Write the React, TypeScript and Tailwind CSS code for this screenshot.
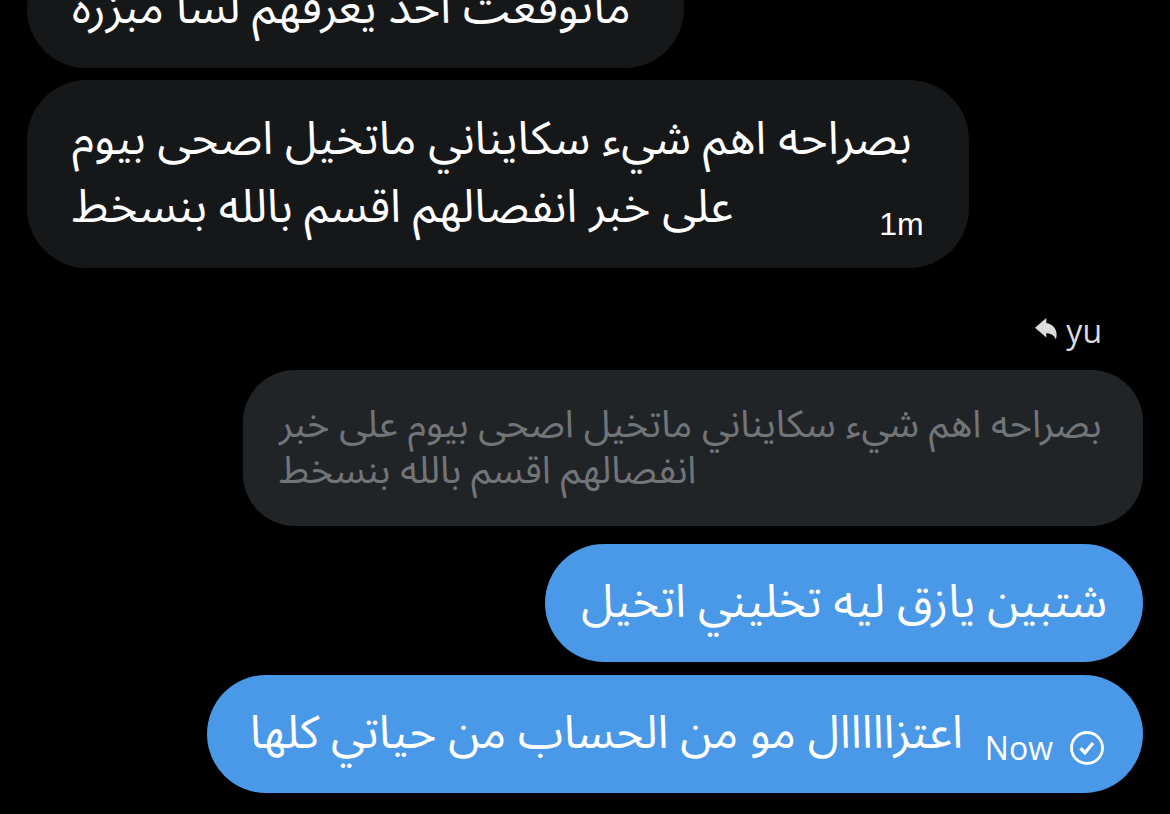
import type { ReactNode } from "react";

type BubbleProps = { children: ReactNode; className: string };

function Bubble({ children, className }: BubbleProps) {
  return <article className={`w-fit max-w-full ${className}`}>{children}</article>;
}

function SentIcon() {
  return (
    <svg role="img" aria-label="Sent" viewBox="0 0 36 36" className="size-9 shrink-0" fill="none" stroke="currentColor">
      <circle cx="18" cy="18" r="15.5" strokeWidth="2.8" />
      <path d="M11.5 18.3l4.5 4.5 8-9.8" strokeWidth="3.4" />
    </svg>
  );
}

function ReplyIcon() {
  return (
    <svg aria-hidden="true" viewBox="0 0 22 22" className="mb-1 size-[22px]" fill="currentColor">
      <path d="M0 9.7 11.3 0v4.9c6.3 1 10.3 5.6 10.3 11.6 0 1.8-.2 3.4-.7 5-1.6-4.1-4.9-6.3-9.6-6.3v4.4z" />
    </svg>
  );
}

export default function App() {
  return (
    <main
      lang="ar"
      className="flex h-screen flex-col overflow-hidden bg-black px-[27px] font-['Noto_Sans','Noto_Sans_Arabic',sans-serif] text-[46px] leading-[68px] text-white"
    >
      <section className="flex flex-col items-start gap-3">
        <Bubble className="-mt-[50px] rounded-[60px] bg-[#161719] pt-[21px] pr-[53px] pb-[29px] pl-[45px]">
          <p dir="rtl">ماتوقعت احد يعرفهم لسا مبزره</p>
        </Bubble>
        <Bubble className="rounded-[60px] bg-[#161719] pt-[22px] pr-[45px] pb-[30px] pl-[45px]">
          <p dir="rtl" className="pr-3">بصراحه اهم شيء سكايناني ماتخيل اصحى بيوم</p>
          <div className="flex items-end justify-between">
            <p dir="rtl">على خبر انفصالهم اقسم بالله بنسخط</p>
            <time className="font-['Liberation_Sans',sans-serif] text-[32px] leading-7">1m</time>
          </div>
        </Bubble>
      </section>

      <section className="mt-[41px] flex flex-col items-end">
        <div className="mr-[41px] flex items-center gap-[9px] font-['Open_Sans',sans-serif] text-[32px] leading-[44px] text-[#dcdcdc]">
          <ReplyIcon />
          <span>yu</span>
        </div>
        <Bubble className="mt-[17px] rounded-[52px] bg-[#212427] pt-[29px] pr-[40px] pb-[35px] pl-9 text-[#717579]">
          <blockquote dir="rtl" className="max-w-[824px] text-left text-[38px] leading-[46px]">
            بصراحه اهم شيء سكايناني ماتخيل اصحى بيوم على خبر انفصالهم اقسم بالله بنسخط
          </blockquote>
        </Bubble>
        <Bubble className="mt-[18px] rounded-[60px] bg-[#4a99e9] px-9 pt-[21px] pb-[29px]">
          <p dir="rtl">شتبين يازق ليه تخليني اتخيل</p>
        </Bubble>
        <Bubble className="mt-[13px] flex items-end gap-[22px] rounded-[60px] bg-[#4a99e9] pt-[21px] pr-[38px] pb-[26px] pl-[43px]">
          <p dir="rtl" className="pb-[3px]">اعتزااااال مو من الحساب من حياتي كلها</p>
          <div className="flex items-center gap-4 font-['Open_Sans',sans-serif] text-[32px] leading-[38px]">
            <time>Now</time>
            <SentIcon />
          </div>
        </Bubble>
      </section>
    </main>
  );
}
